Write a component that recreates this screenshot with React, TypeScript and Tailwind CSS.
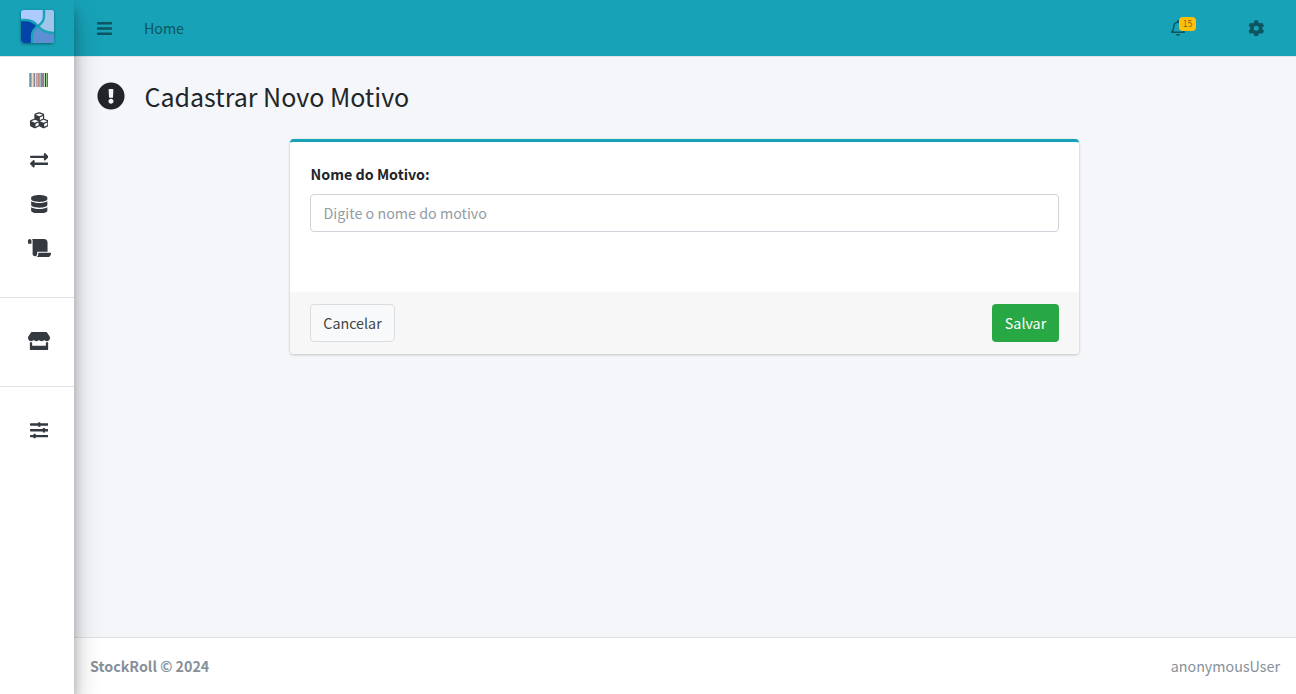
import React from "react";
import {
  FaBarcode, FaCubes, FaExchangeAlt, FaDatabase, FaScroll, FaStore, FaSlidersH,
  FaBars, FaRegBell, FaCog, FaExclamationCircle,
} from "react-icons/fa";

function Logo() {
  return (
    <svg viewBox="0 0 33 33" className="h-[33px] w-[33px] rounded-[3px] shadow-[0_1px_3px_rgba(0,0,0,0.4)]">
      <rect width="33" height="33" fill="#adcbff" />
      <path d="M23 0V6Q23 12 17 16Q22 23 33 23V0Z" fill="#9fc5e8" />
      <path d="M17 16Q22 23 33 23V33H11V26Q11 20 17 16Z" fill="#5f8fd3" />
      <path d="M0 10H4Q12 10 17 16Q11 20 11 26V33H0Z" fill="#0344a8" />
      <path d="M23 0V6Q23 12 17 16Q11 20 11 26V33M0 10H4Q12 10 17 16Q22 23 33 23" fill="none" stroke="#17a2b8" strokeWidth="2.4" />
    </svg>
  );
}

function SideItem({ children, className }: { children: React.ReactNode; className: string }) {
  return <a className={`flex w-[77px] shrink-0 items-center justify-center ${className}`}>{children}</a>;
}

function Sidebar() {
  return (
    <aside className="relative z-10 flex w-[74px] shrink-0 flex-col bg-white text-[18.5px] text-[#343a40] shadow-[0_14px_28px_rgba(0,0,0,0.25),0_10px_10px_rgba(0,0,0,0.22)]">
      <div className="flex h-[57px] justify-center border-b border-[#dee2e6] bg-[#17a2b8] pt-[10px]">
        <Logo />
      </div>
      <SideItem className="mt-[3px] h-10">
        <svg viewBox="0 0 19 14" className="h-[14px] w-[19px]" shapeRendering="crispEdges">
          <path d="M0 0h1v14H0z" fill="#cf9b86" />
          <path d="M1 0h1v14H1zM12 0h1v14h-1z" fill="#6c93a3" />
          <path d="M2 0h1v14H2zM11 0h1v14h-1z" fill="#8fbfc4" />
          <path d="M3 0h1v14H3zM6 0h1v14H6z" fill="#e9e3bd" />
          <path d="M4 0h1v14H4zM8 0h1v14H8z" fill="#c3b1c9" />
          <path d="M5 0h1v14H5z" fill="#8d80a8" />
          <path d="M7 0h1v14H7zM10 0h1v14h-1z" fill="#b3a39f" />
          <path d="M9 0h1v14H9z" fill="#c48c83" />
          <path d="M13 0h1v14h-1z" fill="#a87892" />
          <path d="M14 0h1v14h-1z" fill="#7c8b75" />
          <path d="M15 0h1v14h-1z" fill="#b7e2b2" />
          <path d="M16 0h1v14h-1z" fill="#3b3f45" />
          <path d="M17 0h1v14h-1z" fill="#9ccb9c" />
          <path d="M18 0h1v14h-1z" fill="#62707c" />
        </svg>
      </SideItem>
      <SideItem className="h-10 pl-px"><FaCubes /></SideItem>
      <SideItem className="h-10 pl-px"><FaExchangeAlt /></SideItem>
      <SideItem className="mt-1 h-10 pl-px"><FaDatabase /></SideItem>
      <SideItem className="mt-1 h-10 pl-px"><FaScroll className="h-[18.5px] w-[23px]" /></SideItem>
      <div className="mt-[29px] flex h-[90px] items-center border-y border-[#dee2e6]">
        <SideItem className="mb-[2px] h-10"><FaStore className="h-[18.5px] w-[22px]" /></SideItem>
      </div>
      <SideItem className="mt-[23px] h-10 pl-px"><FaSlidersH /></SideItem>
    </aside>
  );
}

export default function App() {
  return (
    <div className="flex h-[694px] w-full overflow-hidden bg-[#f4f6f9] font-['Noto_Sans_CJK_JP','Noto_Sans_CJK_SC',sans-serif] text-[14.3px] text-[#212529]">
      <Sidebar />
      <div className="flex min-w-0 flex-1 flex-col">
        <header className="flex h-[57px] shrink-0 items-center border-b border-[#dee2e6] bg-[#17a2b8] pl-[23px] pr-[31px] text-[#0c5561]">
          <FaBars className="h-[17px] w-[15px]" />
          <span className="ml-[32px] pt-[2px] text-[14.2px]">Home</span>
          <div className="relative ml-auto mr-[63px] h-4 w-[14px]">
            <FaRegBell className="h-4 w-[14px]" />
            <span className="absolute -top-[3px] left-2 flex h-[14px] w-[17px] items-center justify-center rounded-[4px] bg-[#ffc107] text-[9px] font-light text-[#4d3c10]">15</span>
          </div>
          <FaCog className="mr-[0.5px] h-[16.5px] w-[16.5px]" />
        </header>
        <main className="flex-1">
          <h1 className="flex h-[82px] items-center pl-[22.5px] text-[25px]">
            <FaExclamationCircle className="mb-[4px] h-[28px] w-[28px]" />
            <span className="mb-[2px] ml-5">Cadastrar Novo Motivo</span>
          </h1>
          <form className="ml-[216px] flex h-[215px] w-[789px] flex-col overflow-hidden rounded-[4px] border-t-[3px] border-[#17a2b8] bg-white shadow-[0_0_1px_rgba(0,0,0,0.125),0_1px_3px_rgba(0,0,0,0.2)]">
            <div className="flex flex-1 flex-col px-5 pt-5">
              <label className="mb-2 h-6 pl-[0.5px] font-bold leading-6">Nome do Motivo:</label>
              <input placeholder="Digite o nome do motivo" className="h-[38px] w-full rounded-[4px] border border-[#ced4da] px-[12.5px] pb-[2px] placeholder:text-[#939ba2]" />
            </div>
            <footer className="flex h-[62px] items-center justify-between bg-[#f7f7f7] px-5">
              <button type="button" className="h-[38px] w-[85px] rounded-[4px] border border-[#dddddd] bg-[#f8f9fa] text-[#444444]">Cancelar</button>
              <button type="button" className="h-[38px] w-[67px] rounded-[4px] bg-[#28a745] text-white">Salvar</button>
            </footer>
          </form>
        </main>
        <footer className="flex h-[57px] shrink-0 items-center justify-between border-t border-[#dee2e6] bg-white px-4 text-[#869099]">
          <strong>StockRoll © 2024</strong>
          <span>anonymousUser</span>
        </footer>
      </div>
    </div>
  );
}
